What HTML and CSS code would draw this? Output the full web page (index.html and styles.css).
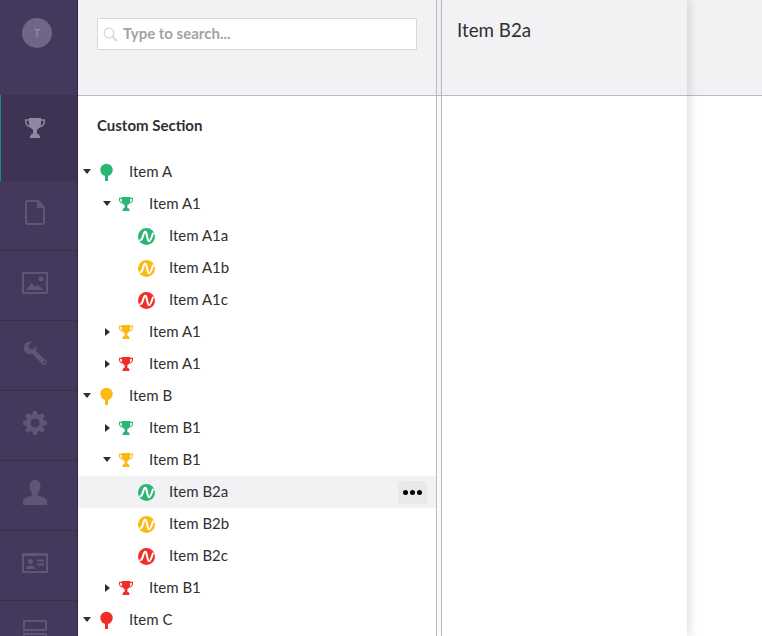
FILE: index.html
```html
<!DOCTYPE html>
<html lang="en">
<head>
  <meta charset="UTF-8">
  <title>Custom Section</title>
  <link rel="stylesheet" href="styles.css">
</head>
<body>
  <svg class="defs" width="0" height="0" aria-hidden="true">
    <symbol id="trophy" viewBox="0 0 20 20">
      <path fill-rule="evenodd" d="M4 0H16V1.200H20V3.800C20 6.800 18 8.900 14.700 9.400C13.900 10.400 13 11.100 12 11.400V14.800C12 15.800 12.800 16.300 14.300 16.600V18H15V20H5V18H5.700V16.600C7.200 16.300 8 15.800 8 14.800V11.400C7 11.100 6.100 10.400 5.300 9.400C2 8.900 0 6.800 0 3.800V1.200H4ZM1.500 2.700V3.800C1.500 5.700 2.600 7.100 4.400 7.700C4 6.200 3.900 4.500 3.900 2.700ZM18.500 2.700H16.100C16.100 4.500 16 6.200 15.600 7.700C17.400 7.100 18.500 5.700 18.500 3.800Z"/>
    </symbol>
    <symbol id="tree" viewBox="0 0 13 18">
      <circle cx="6.500" cy="7" r="6.200"/>
      <path d="M5 10h3v8H5z"/>
    </symbol>
    <symbol id="wave" viewBox="0 0 17 17">
      <circle cx="8.500" cy="8.500" r="8.500"/>
      <path d="M2.300 12.200C3.800 12.200 4.500 10 5.100 7.800C5.700 5.500 6.200 3.900 7.200 3.900C8.400 3.900 8.600 6 9.100 8.500C9.600 11 10.100 13.200 11.200 13.200C12.500 13.200 13.200 10.600 14.900 5.600" fill="none" stroke="#fff" stroke-width="2.100" stroke-linecap="round"/>
    </symbol>
  </svg>

  <div class="app">
    <nav class="sidebar">
      <div class="sidebar-top">
        <div class="avatar">T</div>
      </div>
      <div class="nav-item nav-active">
        <svg class="nav-icon" width="20" height="20"><use href="#trophy"/></svg>
      </div>
      <div class="nav-item">
        <svg class="nav-icon" width="20" height="25" viewBox="0 0 20 25">
          <path fill-rule="evenodd" d="M3 0h10.500L20 6.500V22a3 3 0 0 1-3 3H3a3 3 0 0 1-3-3V3a3 3 0 0 1 3-3zm0 2a1 1 0 0 0-1 1v19a1 1 0 0 0 1 1h14a1 1 0 0 0 1-1V8h-6V2z"/>
        </svg>
      </div>
      <div class="nav-item">
        <svg class="nav-icon" width="26" height="22" viewBox="0 0 26 22">
          <path fill-rule="evenodd" d="M0 0h26v22H0zm2 2v18h22V2z"/>
          <circle cx="19" cy="7" r="2.500"/>
          <path d="M4 18l5.500-7 3.500 3.500 2.500-1.500 6.500 5z"/>
        </svg>
      </div>
      <div class="nav-item">
        <svg class="nav-icon" width="24" height="24" viewBox="0 0 24 24">
          <path fill-rule="evenodd" d="M9 .8L5.500 4.300 6.300 7.700 9.700 8.500 13.200 5C13.800 7 13.500 8.600 12.700 9.700L23 19.500C24.500 21 24 23 22.700 23.600C21.500 24.300 20 24 19 23L9.300 12.800C7 13.700 4.500 13 2.800 11.500C.6 9.300 .4 6.500 1.500 4C3 1 6 .1 9 .8ZM21.200 19.900a1.200 1.200 0 1 0 0 2.400 1.200 1.200 0 0 0 0-2.400z"/>
        </svg>
      </div>
      <div class="nav-item">
        <svg class="nav-icon" width="24" height="24" viewBox="0 0 24 24">
          <path fill-rule="evenodd" d="M10 0h4l.6 3.200 1.900.8L19.200 2 22 4.800 20 7.500l.8 1.900L24 10v4l-3.200.6-.8 1.900 2 2.700-2.800 2.800-2.700-2-1.900.8L14 24h-4l-.6-3.200-1.900-.8-2.700 2L2 19.200l2-2.700-.8-1.900L0 14v-4l3.200-.6.8-1.900-2-2.700L4.800 2l2.700 2 1.900-.8zm2 7.500a4.500 4.500 0 1 0 0 9 4.500 4.500 0 0 0 0-9z"/>
        </svg>
      </div>
      <div class="nav-item">
        <svg class="nav-icon" width="24" height="25" viewBox="0 0 24 25">
          <path d="M12 0c3.200 0 5.500 2.500 5.500 6 0 2.800-1 5.300-2.500 7v2.500c3.500 1 9 2.500 9 6V25H0v-3.500c0-3.500 5.500-5 9-6V13c-1.500-1.700-2.500-4.200-2.500-7 0-3.500 2.300-6 5.500-6z"/>
        </svg>
      </div>
      <div class="nav-item">
        <svg class="nav-icon" width="26" height="20" viewBox="0 0 26 20">
          <path fill-rule="evenodd" d="M0 0h26v20H0zm2 3v15h22V3z"/>
          <circle cx="8.500" cy="8.500" r="2.500"/>
          <path d="M4 16c0-2.500 2-3.500 4.500-3.500S13 13.500 13 16zM15 6.500h7v2h-7zm0 4h7v2h-7z"/>
        </svg>
      </div>
      <div class="nav-item">
        <svg class="nav-icon" width="24" height="26" viewBox="0 0 24 26">
          <path fill-rule="evenodd" d="M0 0h24v11H0zm2 2v7h20V2zM0 13h24v13H0zm2 2v9h20v-9z"/>
        </svg>
      </div>
    </nav>

    <section class="col col-tree">
      <div class="col-head head-search">
        <div class="search">
          <svg class="search-icon" width="15" height="15" viewBox="0 0 15 15">
            <circle cx="6" cy="6" r="4.800"/>
            <path d="M9.500 9.500L14 14" stroke-width="2"/>
          </svg>
          <span class="search-text">Type to search...</span>
        </div>
      </div>
      <div class="col-body">
        <h3 class="section-title">Custom Section</h3>
        <ul class="tree">
          <li class="row level-0"><i class="arrow down"></i><span class="row-icon green"><svg width="13" height="18"><use href="#tree"/></svg></span><span class="row-label">Item A</span></li>
          <li class="row level-1"><i class="arrow down"></i><span class="row-icon green"><svg width="14" height="14"><use href="#trophy"/></svg></span><span class="row-label">Item A1</span></li>
          <li class="row level-2"><i class="arrow"></i><span class="row-icon green"><svg width="17" height="17"><use href="#wave"/></svg></span><span class="row-label">Item A1a</span></li>
          <li class="row level-2"><i class="arrow"></i><span class="row-icon yellow"><svg width="17" height="17"><use href="#wave"/></svg></span><span class="row-label">Item A1b</span></li>
          <li class="row level-2"><i class="arrow"></i><span class="row-icon red"><svg width="17" height="17"><use href="#wave"/></svg></span><span class="row-label">Item A1c</span></li>
          <li class="row level-1"><i class="arrow right"></i><span class="row-icon yellow"><svg width="14" height="14"><use href="#trophy"/></svg></span><span class="row-label">Item A1</span></li>
          <li class="row level-1"><i class="arrow right"></i><span class="row-icon red"><svg width="14" height="14"><use href="#trophy"/></svg></span><span class="row-label">Item A1</span></li>
          <li class="row level-0"><i class="arrow down"></i><span class="row-icon yellow"><svg width="13" height="18"><use href="#tree"/></svg></span><span class="row-label">Item B</span></li>
          <li class="row level-1"><i class="arrow right"></i><span class="row-icon green"><svg width="14" height="14"><use href="#trophy"/></svg></span><span class="row-label">Item B1</span></li>
          <li class="row level-1"><i class="arrow down"></i><span class="row-icon yellow"><svg width="14" height="14"><use href="#trophy"/></svg></span><span class="row-label">Item B1</span></li>
          <li class="row level-2 row-selected"><i class="arrow"></i><span class="row-icon green"><svg width="17" height="17"><use href="#wave"/></svg></span><span class="row-label">Item B2a</span>
            <button class="more"><b></b><b></b><b></b></button>
          </li>
          <li class="row level-2"><i class="arrow"></i><span class="row-icon yellow"><svg width="17" height="17"><use href="#wave"/></svg></span><span class="row-label">Item B2b</span></li>
          <li class="row level-2"><i class="arrow"></i><span class="row-icon red"><svg width="17" height="17"><use href="#wave"/></svg></span><span class="row-label">Item B2c</span></li>
          <li class="row level-1"><i class="arrow right"></i><span class="row-icon red"><svg width="14" height="14"><use href="#trophy"/></svg></span><span class="row-label">Item B1</span></li>
          <li class="row level-0"><i class="arrow down"></i><span class="row-icon red"><svg width="13" height="18"><use href="#tree"/></svg></span><span class="row-label">Item C</span></li>
        </ul>
      </div>
    </section>

    <section class="col col-gap">
      <div class="col-head"></div>
    </section>

    <section class="col col-detail">
      <div class="col-head head-title">Item B2a</div>
    </section>

    <section class="col col-rest">
      <div class="col-head"></div>
    </section>
  </div>
</body>
</html>
```

FILE: styles.css
```css
* {
  box-sizing: border-box;
}

html,
body {
  height: 100%;
  margin: 0;
  overflow: hidden;
}

body {
  font-family: Lato, "Open Sans", sans-serif;
  font-size: 15px;
  color: #303033;
  background-color: #fff;
}

.defs {
  position: absolute;
}

.app {
  display: flex;
  height: 636px;
}

/* left nav */
.sidebar {
  flex: 0 0 78px;
  background-color: #44395d;
  border-right: 1px solid #2f2645;
  overflow: hidden;
}

.sidebar-top {
  height: 95px;
  padding: 18px 0 0 22px;
}

.avatar {
  width: 30px;
  height: 30px;
  border-radius: 50%;
  background-color: #6f6785;
  color: #8f889f;
  font-size: 11px;
  font-weight: 700;
  line-height: 30px;
  text-align: center;
}

.nav-item {
  display: flex;
  align-items: center;
  justify-content: center;
  height: 70px;
  padding: 0 7px 6px 0;
  border-bottom: 1px solid #3a3050;
}

.nav-item:last-child {
  height: 80px;
  padding-bottom: 16px;
  border-bottom: none;
}

.nav-active {
  height: 86px;
  padding-bottom: 20px;
  background-color: #3e3352;
  border-left: 1px solid #1a8a8f;
  border-bottom: none;
  padding-right: 8px;
}

.nav-icon {
  display: block;
  flex: none;
  fill: #5f5675;
}

.nav-active .nav-icon {
  fill: #8f889f;
}

/* columns */
.col {
  display: flex;
  flex-direction: column;
}

.col-head {
  flex: none;
  height: 96px;
  background-color: #f2f2f4;
  border-bottom: 1px solid #bbbac4;
}

.col-tree {
  flex: 0 0 359px;
  border-right: 1px solid #bbbac4;
}

.col-gap {
  flex: 0 0 4px;
}

.col-detail {
  flex: 0 0 246px;
  border-left: 1px solid #bbbac4;
  box-shadow: 3px 0 9px rgba(0, 0, 0, 0.12);
  background-color: #fff;
  position: relative;
}

.col-rest {
  flex: 1;
}

.head-search {
  padding: 18px 19px 0;
}

.search {
  display: flex;
  align-items: center;
  width: 320px;
  height: 32px;
  padding-left: 5px;
  background-color: #fff;
  border: 1px solid #d8d7d9;
}

.search-icon {
  flex: none;
  fill: none;
  stroke: #d8d7d9;
  stroke-width: 1.3;
}

.search-text {
  margin-left: 5px;
  padding-bottom: 2px;
  font-size: 15px;
  font-weight: 700;
  color: #a3a2a9;
}

.head-title {
  padding: 18px 15px 0;
  font-size: 18.75px;
  line-height: 24px;
}

.section-title {
  margin: 0;
  padding: 20px 19px 0;
  font-size: 15px;
  font-weight: 700;
  line-height: 18px;
}

/* tree */
.tree {
  list-style: none;
  margin: 22px 0 0;
  padding: 0;
}

.row {
  display: flex;
  align-items: center;
  height: 32px;
}

.row-label {
  padding-bottom: 2px;
}

.level-0 {
  padding-left: 4px;
}

.level-1 {
  padding-left: 24px;
}

.level-2 {
  padding-left: 44px;
}

.row-selected {
  background-color: #f2f2f4;
}

.arrow {
  flex: 0 0 10px;
  width: 10px;
  height: 8px;
  position: relative;
}

.arrow.down::before {
  content: "";
  position: absolute;
  left: 1px;
  top: 1px;
  border-style: solid;
  border-width: 5px 4px 0;
  border-color: #303033 transparent transparent;
}

.arrow.right::before {
  content: "";
  position: absolute;
  left: 3px;
  top: 0;
  border-style: solid;
  border-width: 4px 0 4px 5px;
  border-color: transparent transparent transparent #303033;
}

.row-icon {
  flex: 0 0 28px;
  display: flex;
  align-items: center;
  justify-content: center;
  margin-right: 9px;
}

.green {
  fill: #2bb673;
}

.yellow {
  fill: #fdb913;
}

.red {
  fill: #f02e28;
}

.more {
  display: flex;
  align-items: center;
  justify-content: center;
  gap: 2px;
  width: 29px;
  height: 23px;
  margin-left: auto;
  margin-right: 9px;
  padding: 0;
  border: none;
  border-radius: 3px;
  background-color: #e9e9eb;
}

.more b {
  width: 5px;
  height: 5px;
  border-radius: 50%;
  background-color: #000;
}
```
